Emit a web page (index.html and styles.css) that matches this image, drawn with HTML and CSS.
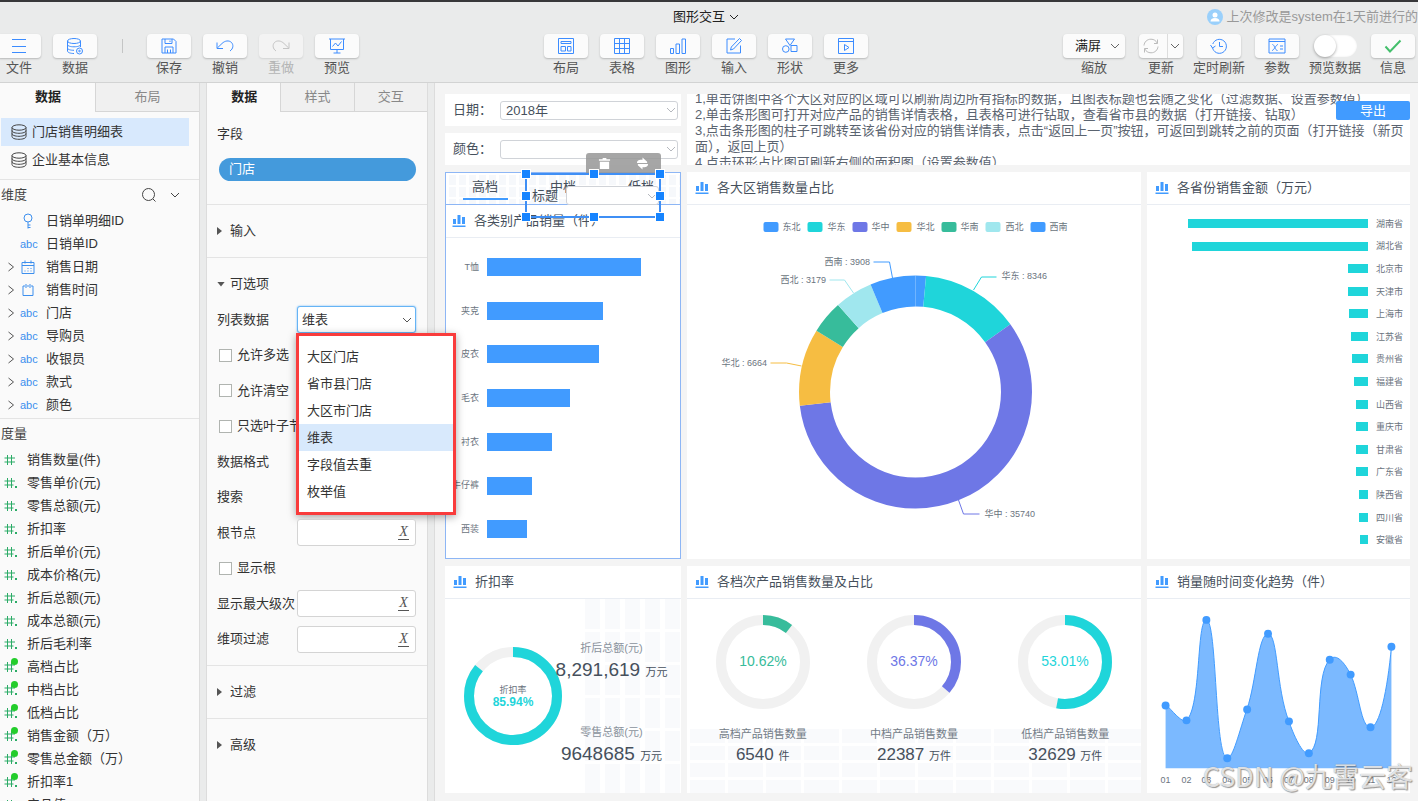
FILE: index.html
```
<!DOCTYPE html>
<html lang="zh-CN">
<head>
<meta charset="utf-8">
<title>图形交互</title>
<link rel="stylesheet" href="styles.css">
</head>
<body>
<svg class="sprite" aria-hidden="true">
  <symbol id="i-menu" viewBox="0 0 18 18"><path d="M2 2.500h14M2 9.500h14M2 15.500h14"/></symbol>
  <symbol id="i-db" viewBox="0 0 18 18"><ellipse cx="8" cy="4" rx="6.500" ry="2.500"/><path d="M1.500 4v10c0 1.500 3 2.500 6.500 2.500M14.500 4v6M1.500 7.500c0 1.500 3 2.300 6.500 2.300s6.500-.8 6.500-2.300M1.500 11c0 1.500 3 2.300 6.500 2.300"/><circle cx="13.500" cy="14" r="3"/><circle cx="13.500" cy="14" r=".8"/></symbol>
  <symbol id="i-save" viewBox="0 0 18 18"><path d="M2 2h11.500L16 4.500V16H2zM5 2v4.500h7V2M5 16v-6h8v6M7.500 12.500V16M10.500 12.500V16M10 3.500V5"/></symbol>
  <symbol id="i-undo" viewBox="0 0 18 18"><path d="M1 5.500v6h6M1.300 11L6 6.500c3-3 7-3.300 9.300-1.200 2.500 2.400 2 6.500-1.300 8.700"/></symbol>
  <symbol id="i-redo" viewBox="0 0 18 18"><path d="M17 5.500v6h-6M16.700 11L12 6.500C9 3.500 5 3.200 2.700 5.300.2 7.700.7 11.800 4 14"/></symbol>
  <symbol id="i-preview" viewBox="0 0 18 18"><path d="M1 2h16M2.500 2v10.500h13V2M4.500 9.500l3-3.500 2.500 3 3.500-4.500M9 12.500V16M5.500 16h7"/></symbol>
  <symbol id="i-layout" viewBox="0 0 18 18"><path d="M1.500 1.500h15v15h-15zM4 4.500h10v2H4zM4 9.500h4.500V14H4zM10.500 9.500H14V14h-3.500z"/></symbol>
  <symbol id="i-table" viewBox="0 0 18 18"><path d="M1.500 1.500h15v15h-15zM1.500 6.500h15M1.500 11.500h15M6.500 1.500v15M11.500 1.500v15"/></symbol>
  <symbol id="i-chart" viewBox="0 0 18 18"><path d="M1.500 11.500h3v5h-3zM7 7h3.500v9.500H7zM13 2h3.500v14.500H13z"/></symbol>
  <symbol id="i-edit" viewBox="0 0 18 18"><path d="M10 2H2v14h13.500V8.500M14.500 1.500l2 2-8 8.500-3 1 .8-3z"/></symbol>
  <symbol id="i-shape" viewBox="0 0 18 18"><path d="M4.500 2h9L9 8.500zM10 8.500h6v6h-6z"/><circle cx="4.800" cy="12" r="3.300"/></symbol>
  <symbol id="i-more" viewBox="0 0 18 18"><path d="M1.500 1.500h15v15h-15zM1.500 4.500h15M7.500 7.500l4.500 3-4.500 3z"/></symbol>
  <symbol id="i-refresh" viewBox="0 0 18 18"><path d="M2 8.500C2.300 5 5 2.200 9 2.200c3 0 5 1.500 6.300 4M15.500 2.500v4H12M16 9.500c-.3 3.500-3 6.300-7 6.300-3 0-5-1.500-6.300-4M2.500 15.500v-4H6"/></symbol>
  <symbol id="i-clock" viewBox="0 0 18 18"><path d="M2.500 10.500a7 7 0 1 0 .3-3.500M.5 8l2 3 3-2M9.500 5v4.500H13"/></symbol>
  <symbol id="i-param" viewBox="0 0 18 18"><path d="M1 2h16v14H1zM1 4.500h16M4.500 7.500c2 0 2.500 6 5 6M10 7.500c-2 0-4 6-6 6M12 9h3M12 12h3"/></symbol>
  <symbol id="i-check" viewBox="0 0 18 18"><path d="M1.500 9.500l4.500 5L16.500 3.500"/></symbol>
  <symbol id="i-down" viewBox="0 0 10 10"><path d="M1 3l4 4 4-4"/></symbol>
  <symbol id="i-right" viewBox="0 0 10 10"><path d="M2.500 1l5 4-5 4"/></symbol>
  <symbol id="i-stack" viewBox="0 0 16 16"><ellipse cx="8" cy="3.500" rx="7" ry="2.700"/><path d="M1 3.500v9c0 1.700 3 2.800 7 2.800s7-1.100 7-2.800v-9M1 6.500c0 1.700 3 2.800 7 2.800s7-1.100 7-2.800M1 9.500c0 1.700 3 2.800 7 2.800s7-1.100 7-2.800"/></symbol>
  <symbol id="i-search" viewBox="0 0 16 16"><circle cx="7.500" cy="7.500" r="6"/><path d="M12 12l2.500 2.500"/></symbol>
  <symbol id="i-key" viewBox="0 0 14 16"><circle cx="7" cy="5" r="4"/><path d="M7 9v6.500M7 12h2.500M7 14.500h2.500"/></symbol>
  <symbol id="i-date" viewBox="0 0 14 14"><path d="M1 2.500h12v11H1zM1 5.500h12M4 .5v3M10 .5v3M3.500 11h1M6.500 11h1M9.500 11h1M6.500 8.500h1M9.500 8.500h1"/></symbol>
  <symbol id="i-time" viewBox="0 0 14 14"><path d="M4 3H2v9.500h10V3h-2M6 3h2M5 1v4M9 1v4"/></symbol>
  <symbol id="i-hash" viewBox="0 0 14 14"><path d="M3.500 2v10M7.500 2v10M.5 5h10.500M.5 9h10.500"/></symbol>
  <symbol id="i-hashdot" viewBox="0 0 14 14"><path d="M3.500 2v10M7.500 2v10M.5 5h10.500M.5 9h9"/><path stroke-width="2" d="M11 11h2"/></symbol>
  <symbol id="i-bars" viewBox="0 0 14 14"><path d="M1 5h3v5H1zM5.500 1h3v9h-3zM10 3h3v7h-3zM.5 11.500h13V13H.5z"/></symbol>
</svg>

<header class="top">
  <div class="title-row">
    <button class="doc-title" type="button">图形交互<svg class="ic10"><use href="#i-down"/></svg></button>
    <p class="modified"><svg class="avatar" viewBox="0 0 16 16"><circle class="av-bg" cx="8" cy="8" r="8"/><circle class="av-fg" cx="8" cy="6" r="2.500"/><path class="av-fg" d="M3.500 12.500c0-2 1.500-3.500 4.500-3.500s4.500 1.500 4.500 3.500z"/></svg>上次修改是system在1天前进行的</p>
  </div>
  <nav class="toolbar">
    <div class="tools">
      <button class="tool" type="button"><span class="face"><svg><use href="#i-menu"/></svg></span>文件</button>
      <button class="tool" type="button"><span class="face"><svg><use href="#i-db"/></svg></span>数据</button>
      <span class="sep"></span>
      <button class="tool" type="button"><span class="face"><svg><use href="#i-save"/></svg></span>保存</button>
      <button class="tool" type="button"><span class="face"><svg><use href="#i-undo"/></svg></span>撤销</button>
      <button class="tool off" type="button" disabled><span class="face"><svg><use href="#i-redo"/></svg></span>重做</button>
      <button class="tool" type="button"><span class="face"><svg><use href="#i-preview"/></svg></span>预览</button>
    </div>
    <div class="tools">
      <button class="tool" type="button"><span class="face"><svg><use href="#i-layout"/></svg></span>布局</button>
      <button class="tool" type="button"><span class="face"><svg><use href="#i-table"/></svg></span>表格</button>
      <button class="tool" type="button"><span class="face"><svg><use href="#i-chart"/></svg></span>图形</button>
      <button class="tool" type="button"><span class="face"><svg><use href="#i-edit"/></svg></span>输入</button>
      <button class="tool" type="button"><span class="face"><svg><use href="#i-shape"/></svg></span>形状</button>
      <button class="tool" type="button"><span class="face"><svg><use href="#i-more"/></svg></span>更多</button>
    </div>
    <div class="tools right">
      <label class="tool wide"><span class="face zoom-face"><select class="zoom-select"><option>满屏</option></select><svg class="ic10"><use href="#i-down"/></svg></span>缩放</label>
      <button class="tool" type="button"><span class="face split"><svg class="grey"><use href="#i-refresh"/></svg><span class="split-arrow"><svg class="ic10"><use href="#i-down"/></svg></span></span>更新</button>
      <button class="tool" type="button"><span class="face"><svg><use href="#i-clock"/></svg></span>定时刷新</button>
      <button class="tool" type="button"><span class="face"><svg><use href="#i-param"/></svg></span>参数</button>
      <label class="tool"><input class="toggle" type="checkbox">预览数据</label>
      <button class="tool" type="button"><span class="face"><svg class="green"><use href="#i-check"/></svg></span>信息</button>
    </div>
  </nav>
</header>

<main class="work">
  <aside class="panel data-panel">
    <div class="tabs"><button class="tab on" type="button">数据</button><button class="tab" type="button">布局</button></div>
    <ul class="sources">
      <li class="source on"><svg><use href="#i-stack"/></svg>门店销售明细表</li>
      <li class="source"><svg><use href="#i-stack"/></svg>企业基本信息</li>
    </ul>
    <section class="dims">
      <h2 class="list-head">维度<span class="head-tools"><svg class="ic16"><use href="#i-search"/></svg><svg class="ic10"><use href="#i-down"/></svg></span></h2>
      <ul>
        <li class="dim"><i></i><svg class="typ key"><use href="#i-key"/></svg>日销单明细ID</li>
        <li class="dim"><i></i><span class="typ">abc</span>日销单ID</li>
        <li class="dim"><svg class="ic10"><use href="#i-right"/></svg><svg class="typ"><use href="#i-date"/></svg>销售日期</li>
        <li class="dim"><svg class="ic10"><use href="#i-right"/></svg><svg class="typ"><use href="#i-time"/></svg>销售时间</li>
        <li class="dim"><svg class="ic10"><use href="#i-right"/></svg><span class="typ">abc</span>门店</li>
        <li class="dim"><svg class="ic10"><use href="#i-right"/></svg><span class="typ">abc</span>导购员</li>
        <li class="dim"><svg class="ic10"><use href="#i-right"/></svg><span class="typ">abc</span>收银员</li>
        <li class="dim"><svg class="ic10"><use href="#i-right"/></svg><span class="typ">abc</span>款式</li>
        <li class="dim"><svg class="ic10"><use href="#i-right"/></svg><span class="typ">abc</span>颜色</li>
      </ul>
    </section>
    <section class="measures">
      <h2 class="list-head">度量</h2>
      <ul>
        <li class="mea"><svg><use href="#i-hash"/></svg>销售数量(件)</li>
        <li class="mea"><svg><use href="#i-hashdot"/></svg>零售单价(元)</li>
        <li class="mea"><svg><use href="#i-hashdot"/></svg>零售总额(元)</li>
        <li class="mea"><svg><use href="#i-hashdot"/></svg>折扣率</li>
        <li class="mea"><svg><use href="#i-hashdot"/></svg>折后单价(元)</li>
        <li class="mea"><svg><use href="#i-hashdot"/></svg>成本价格(元)</li>
        <li class="mea"><svg><use href="#i-hashdot"/></svg>折后总额(元)</li>
        <li class="mea"><svg><use href="#i-hashdot"/></svg>成本总额(元)</li>
        <li class="mea"><svg><use href="#i-hashdot"/></svg>折后毛利率</li>
        <li class="mea calc"><svg><use href="#i-hashdot"/></svg>高档占比</li>
        <li class="mea calc"><svg><use href="#i-hashdot"/></svg>中档占比</li>
        <li class="mea calc"><svg><use href="#i-hashdot"/></svg>低档占比</li>
        <li class="mea calc"><svg><use href="#i-hashdot"/></svg>销售金额（万）</li>
        <li class="mea calc"><svg><use href="#i-hashdot"/></svg>零售总金额（万）</li>
        <li class="mea calc"><svg><use href="#i-hashdot"/></svg>折扣率1</li>
        <li class="mea"><svg><use href="#i-hashdot"/></svg>产品值</li>
      </ul>
    </section>
  </aside>

  <aside class="panel prop-panel">
    <div class="tabs"><button class="tab on" type="button">数据</button><button class="tab" type="button">样式</button><button class="tab" type="button">交互</button></div>
    <section class="field-sec"><h2>字段</h2><span class="pill">门店</span></section>
    <section class="fold"><h2 class="fold-head"><span class="tri"></span>输入</h2></section>
    <section class="options">
      <h2 class="fold-head"><span class="tri open"></span>可选项</h2>
      <div class="rows">
        <div class="row"><label for="src">列表数据</label>
          <span class="combo"><select id="src" class="box focus"><option>维表</option></select><svg class="ic10"><use href="#i-down"/></svg>
            <ul class="menu"><li>大区门店</li><li>省市县门店</li><li>大区市门店</li><li class="on">维表</li><li>字段值去重</li><li>枚举值</li></ul>
          </span></div>
        <label class="row tick"><input type="checkbox">允许多选</label>
        <label class="row tick"><input type="checkbox">允许清空</label>
        <label class="row tick"><input type="checkbox">只选叶子节点</label>
        <div class="row">数据格式</div>
        <div class="row">搜索</div>
        <div class="row"><label for="root">根节点</label><span class="combo"><input id="root" class="box"><button class="fx" type="button">X</button></span></div>
        <label class="row tick"><input type="checkbox">显示根</label>
        <div class="row"><label for="lvl">显示最大级次</label><span class="combo"><input id="lvl" class="box"><button class="fx" type="button">X</button></span></div>
        <div class="row"><label for="flt">维项过滤</label><span class="combo"><input id="flt" class="box"><button class="fx" type="button">X</button></span></div>
      </div>
    </section>
    <section class="fold"><h2 class="fold-head"><span class="tri"></span>过滤</h2></section>
    <section class="fold"><h2 class="fold-head"><span class="tri"></span>高级</h2></section>
  </aside>

  <div class="canvas">
    <div class="filters">
      <div class="filter"><label for="year">日期：</label><span class="pick"><select id="year"><option>2018年</option></select><svg class="ic10"><use href="#i-down"/></svg></span></div>
      <div class="filter"><label for="color">颜色：</label><span class="pick"><select id="color"><option></option></select><svg class="ic10"><use href="#i-down"/></svg></span></div>
    </div>
    <div class="card note">
      <p>1,单击饼图中各个大区对应的区域可以刷新周边所有指标的数据，且图表标题也会随之变化（过滤数据、设置参数值）<br>2,单击条形图可打开对应产品的销售详情表格，且表格可进行钻取，查看省市县的数据（打开链接、钻取）<br>3,点击条形图的柱子可跳转至该省份对应的销售详情表，点击“返回上一页”按钮，可返回到跳转之前的页面（打开链接（新页<br>面），返回上页）<br>4,点击环形占比图可刷新右侧的面积图（设置参数值）</p>
      <button class="export" type="button">导出</button>
    </div>

    <section class="card tabbed">
      <div class="card-tabs"><button class="ctab on" type="button">高档</button><button class="ctab" type="button">中档</button><button class="ctab" type="button">低档</button></div>
      <h3 class="card-head"><svg><use href="#i-bars"/></svg>各类别产品销量（件）</h3>
      <svg class="plot" viewBox="0 0 234 320">
        <g class="fill-blue"><rect x="41" y="20" width="154" height="18"/><rect x="41" y="64" width="116" height="18"/><rect x="41" y="107" width="112" height="18"/><rect x="41" y="151" width="83" height="18"/><rect x="41" y="195" width="65" height="18"/><rect x="41" y="239" width="45" height="18"/><rect x="41" y="282" width="40" height="18"/></g>
        <g class="axis end"><text x="33" y="32">T恤</text><text x="33" y="76">夹克</text><text x="33" y="119">皮衣</text><text x="33" y="163">毛衣</text><text x="33" y="207">衬衣</text><text x="33" y="250">牛仔裤</text><text x="33" y="294">西装</text></g>
      </svg>
      <div class="selection">
        <div class="sel-tools">
          <button type="button" aria-label="删除"><svg viewBox="0 0 14 14"><path d="M1 2.500h12V4H1zM5 1h4v2H5zM2 5h10v8H2z"/></svg></button>
          <button type="button" aria-label="切换"><svg viewBox="0 0 14 14"><path d="M1 6.500C1 4 3 3 5 3h2V.5l5 4.500v1.500zM13 7.500C13 10 11 11 9 11H7v2.500L2 9V7.500z"/></svg></button>
        </div>
        <label for="sel-title">标题</label>
        <span class="pick"><select id="sel-title"><option></option></select><svg class="ic10"><use href="#i-down"/></svg></span>
        <b class="h nw"></b><b class="h n"></b><b class="h ne"></b><b class="h w"></b><b class="h e"></b><b class="h sw"></b><b class="h s"></b><b class="h se"></b>
      </div>
    </section>

    <section class="card">
      <h3 class="card-head"><svg><use href="#i-bars"/></svg>各大区销售数量占比</h3>
      <svg class="plot" viewBox="0 0 453 354">
        <g>
          <rect class="c-blue" x="76" y="17" width="15" height="10" rx="2"/><rect class="c-cyan" x="120" y="17" width="15" height="10" rx="2"/><rect class="c-violet" x="165" y="17" width="15" height="10" rx="2"/><rect class="c-amber" x="209" y="17" width="15" height="10" rx="2"/><rect class="c-green" x="254" y="17" width="15" height="10" rx="2"/><rect class="c-pale" x="298" y="17" width="15" height="10" rx="2"/><rect class="c-blue" x="343" y="17" width="15" height="10" rx="2"/>
        </g>
        <g class="axis"><text x="95" y="25">东北</text><text x="140" y="25">华东</text><text x="184" y="25">华中</text><text x="229" y="25">华北</text><text x="273" y="25">华南</text><text x="318" y="25">西北</text><text x="362" y="25">西南</text></g>
        <g class="donut" transform="rotate(-90 228 187)">
          <circle class="s-blue" cx="228" cy="187" r="101" pathLength="360" stroke-dasharray="5.300 360"/>
          <circle class="s-cyan" cx="228" cy="187" r="101" pathLength="360" stroke-dasharray="49.200 360" stroke-dashoffset="-5.300"/>
          <circle class="s-violet" cx="228" cy="187" r="101" pathLength="360" stroke-dasharray="208.600 360" stroke-dashoffset="-54.500"/>
          <circle class="s-amber" cx="228" cy="187" r="101" pathLength="360" stroke-dasharray="38.700 360" stroke-dashoffset="-263.100"/>
          <circle class="s-green" cx="228" cy="187" r="101" pathLength="360" stroke-dasharray="16.500 360" stroke-dashoffset="-301.800"/>
          <circle class="s-pale" cx="228" cy="187" r="101" pathLength="360" stroke-dasharray="19 360" stroke-dashoffset="-318.300"/>
          <circle class="s-blue" cx="228" cy="187" r="101" pathLength="360" stroke-dasharray="22.700 360" stroke-dashoffset="-337.300"/>
        </g>
        <g class="leader">
          <path class="s-blue" d="M205 73l-3-16h-16"/><path class="s-pale" d="M166 88l-9-13h-15"/><path class="s-cyan" d="M286 85l8-13h15"/><path class="s-amber" d="M114 161l-15-3H83"/><path class="s-violet" d="M271 295l5 14h16"/>
        </g>
        <g class="axis"><text x="137" y="60">西南 : 3908</text><text x="93" y="78">西北 : 3179</text><text x="314" y="74">华东 : 8346</text><text x="34" y="161">华北 : 6664</text><text x="297" y="312">华中 : 35740</text></g>
      </svg>
    </section>

    <section class="card">
      <h3 class="card-head"><svg><use href="#i-bars"/></svg>各省份销售金额（万元）</h3>
      <svg class="plot" viewBox="0 0 263 354">
        <g class="c-cyan"><rect x="41" y="14" width="180" height="9"/><rect x="45" y="37" width="176" height="9"/><rect x="201" y="59" width="20" height="9"/><rect x="201" y="82" width="20" height="9"/><rect x="202" y="104" width="19" height="9"/><rect x="204" y="127" width="17" height="9"/><rect x="205" y="149" width="16" height="9"/><rect x="207" y="172" width="14" height="9"/><rect x="209" y="195" width="12" height="9"/><rect x="209" y="217" width="12" height="9"/><rect x="209" y="240" width="12" height="9"/><rect x="209" y="262" width="12" height="9"/><rect x="212" y="285" width="9" height="9"/><rect x="212" y="308" width="9" height="9"/><rect x="213" y="330" width="8" height="9"/></g>
        <g class="axis"><text x="229" y="22">湖南省</text><text x="229" y="44">湖北省</text><text x="229" y="67">北京市</text><text x="229" y="90">天津市</text><text x="229" y="112">上海市</text><text x="229" y="135">江苏省</text><text x="229" y="157">贵州省</text><text x="229" y="180">福建省</text><text x="229" y="203">山西省</text><text x="229" y="225">重庆市</text><text x="229" y="248">甘肃省</text><text x="229" y="270">广东省</text><text x="229" y="293">陕西省</text><text x="229" y="316">四川省</text><text x="229" y="338">安徽省</text></g>
      </svg>
    </section>

    <section class="card">
      <h3 class="card-head"><svg><use href="#i-bars"/></svg>折扣率</h3>
      <div class="discount">
        <svg class="ring-lg" viewBox="0 0 98 98">
          <g class="ring" transform="rotate(-90 49 49)"><circle class="s-track" cx="49" cy="49" r="44"/><circle class="s-cyan" cx="49" cy="49" r="44" pathLength="100" stroke-dasharray="85.940 100"/></g>
          <text class="ring-name" x="49" y="46">折扣率</text><text class="ring-bold" x="49" y="59">85.94%</text>
        </svg>
        <dl class="stats"><dt>折后总额(元)</dt><dd>8,291,619 <small>万元</small></dd><dt>零售总额(元)</dt><dd>9648685 <small>万元</small></dd></dl>
      </div>
    </section>

    <section class="card">
      <h3 class="card-head"><svg><use href="#i-bars"/></svg>各档次产品销售数量及占比</h3>
      <div class="gauges">
        <dl class="gauge"><svg viewBox="0 0 94 94"><g class="ring" transform="rotate(-90 47 47)"><circle class="s-track" cx="47" cy="47" r="42"/><circle class="s-green" cx="47" cy="47" r="42" pathLength="100" stroke-dasharray="10.620 100"/></g><text class="c-green" x="47" y="51">10.62%</text></svg><dt>高档产品销售数量</dt><dd>6540 <small>件</small></dd></dl>
        <dl class="gauge"><svg viewBox="0 0 94 94"><g class="ring" transform="rotate(-90 47 47)"><circle class="s-track" cx="47" cy="47" r="42"/><circle class="s-violet" cx="47" cy="47" r="42" pathLength="100" stroke-dasharray="36.370 100"/></g><text class="c-violet" x="47" y="51">36.37%</text></svg><dt>中档产品销售数量</dt><dd>22387 <small>万件</small></dd></dl>
        <dl class="gauge"><svg viewBox="0 0 94 94"><g class="ring" transform="rotate(-90 47 47)"><circle class="s-track" cx="47" cy="47" r="42"/><circle class="s-cyan" cx="47" cy="47" r="42" pathLength="100" stroke-dasharray="53.010 100"/></g><text class="c-cyan" x="47" y="51">53.01%</text></svg><dt>低档产品销售数量</dt><dd>32629 <small>万件</small></dd></dl>
      </div>
    </section>

    <section class="card">
      <h3 class="card-head"><svg><use href="#i-bars"/></svg>销量随时间变化趋势（件）</h3>
      <svg class="plot" viewBox="1147 598 263 195">
        <path class="area" d="M1165 704C1171 709 1181 723 1186 720C1201 706 1196 619 1206 619C1217 619 1214 758 1227 758C1233 758 1239 731 1247 708C1256 682 1258 633 1268 633C1278 633 1276 688 1289 721C1293 733 1303 756 1309 753C1325 745 1314 675 1330 659C1335 653 1343 658 1351 674C1360 693 1361 727 1371 727C1380 727 1388 690 1392 646V768H1165z"/>
        <path class="trend" d="M1165 704C1171 709 1181 723 1186 720C1201 706 1196 619 1206 619C1217 619 1214 758 1227 758C1233 758 1239 731 1247 708C1256 682 1258 633 1268 633C1278 633 1276 688 1289 721C1293 733 1303 756 1309 753C1325 745 1314 675 1330 659C1335 653 1343 658 1351 674C1360 693 1361 727 1371 727C1380 727 1388 690 1392 646"/>
        <g class="c-blue"><circle cx="1165" cy="705" r="4"/><circle cx="1186" cy="720" r="4"/><circle cx="1206" cy="619" r="4"/><circle cx="1227" cy="758" r="4"/><circle cx="1247" cy="709" r="4"/><circle cx="1268" cy="633" r="4"/><circle cx="1289" cy="721" r="4"/><circle cx="1309" cy="753" r="4"/><circle cx="1330" cy="659" r="4"/><circle cx="1351" cy="674" r="4"/><circle cx="1371" cy="727" r="4"/><circle cx="1392" cy="646" r="4"/></g>
        <g class="axis mid"><text x="1165" y="783">01</text><text x="1186" y="783">02</text><text x="1206" y="783">03</text><text x="1227" y="783">04</text><text x="1247" y="783">05</text><text x="1268" y="783">06</text><text x="1289" y="783">07</text><text x="1309" y="783">08</text><text x="1330" y="783">09</text><text x="1351" y="783">10</text><text x="1371" y="783">11</text><text x="1392" y="783">12</text></g>
      </svg>
    </section>
  </div>
</main>
<div class="watermark">CSDN @九霄云客</div>
</body>
</html>
```
FILE: styles.css
```
* { box-sizing: border-box; margin: 0; padding: 0; }
body { height: 100vh; display: flex; flex-direction: column; overflow: hidden; background: #eaebeb; color: #333; font: 13px/18px "Liberation Sans", "Noto Sans CJK SC", sans-serif; }
button, select, input { font: inherit; color: inherit; background: none; border: 0; appearance: none; outline: 0; }
ul { list-style: none; }
h2, h3 { font-size: 13px; font-weight: 400; }
svg { fill: none; stroke: currentColor; flex: none; }
svg text { stroke: none; }
.sprite { display: none; }
.ic10 { width: 10px; height: 10px; }
.ic16 { width: 16px; height: 16px; }

/* header */
.top { flex: none; height: 83px; border-top: 2px solid #38383a; border-bottom: 1px solid #d2d3d3; }
.title-row { position: relative; height: 32px; display: flex; justify-content: center; padding-right: 6px; }
.doc-title { display: flex; align-items: center; gap: 4px; color: #222; height: 30px; }
.modified { position: absolute; right: 0; top: 0; height: 30px; display: flex; align-items: center; gap: 4px; color: #999; white-space: nowrap; }
.avatar { width: 16px; height: 16px; stroke: none; }
.av-bg { fill: #9ad0fb; }
.av-fg { fill: #fff; }
.toolbar { display: grid; grid-template-columns: 1fr auto 1fr; margin-left: -3px; padding-right: 3px; }
.tools { display: flex; gap: 12px; }
.tools.right { justify-content: flex-end; gap: 14px; }
.tool { width: 44px; display: flex; flex-direction: column; align-items: center; gap: 1px; white-space: nowrap; color: #555; }
.tool.wide { width: 62px; }
.face { width: 100%; height: 24px; display: flex; align-items: center; justify-content: center; border-radius: 4px; background: #fbfbfb; box-shadow: 0 1px 2px rgba(0,0,0,.22); }
.face svg { width: 18px; height: 18px; color: #3c8cff; }
.face svg.ic10 { width: 10px; height: 10px; color: #666; }
.face svg.grey { color: #bbb; }
.face svg.green { color: #44bf6c; stroke-width: 2; }
.off { color: #b4b5b5; }
.off .face { background: #f3f3f3; box-shadow: 0 1px 2px rgba(0,0,0,.1); }
.off .face svg { color: #c4c4c4; }
.sep { width: 26px; height: 24px; display: flex; justify-content: center; align-items: center; }
.sep::before { content: ""; width: 1px; height: 14px; background: #c4c5c5; }
.zoom-face { padding: 0 5px 0 12px; }
.zoom-select { flex: 1; color: #222; min-width: 0; }
.split { overflow: hidden; justify-content: space-around; }
.split-arrow { display: flex; align-items: center; height: 100%; padding-left: 2px; border-left: 1px solid #ddd; }
.toggle { width: 43px; height: 22px; margin: 1px 0; border-radius: 11px; background: #fff; box-shadow: inset 0 0 2px rgba(0,0,0,.1); }
.toggle::before { content: ""; display: block; width: 22px; height: 22px; border-radius: 11px; background: #fff; box-shadow: 0 1px 3px rgba(0,0,0,.35); }

/* panels */
.work { flex: 1; min-height: 0; display: flex; }
.panel { flex: none; overflow: hidden; background: #fafafa; }
.data-panel { width: 200px; border-right: 1px solid #dcdcdc; margin-right: 6px; }
.prop-panel { width: 222px; border: solid #dcdcdc; border-width: 0 1px; margin-right: 6px; overflow: visible; position: relative; z-index: 2; }
.tabs { display: flex; height: 29px; }
.tab { flex: 1; height: 29px; background: #f0f0f0; color: #888; border: solid #d6d6d6; border-width: 0 0 1px 1px; }
.tab.on { background: none; color: #222; font-weight: 700; border-color: transparent; }
.data-panel .tab.on { flex: none; width: 95px; }
.sources { padding: 6px 10px 6px 1px; border-bottom: 1px solid #e4e4e4; }
.source { height: 27px; padding-left: 10px; display: flex; align-items: center; gap: 5px; }
.source svg { width: 16px; height: 16px; color: #444; }
.source.on { height: 28px; background: #d8e9fd; }
.dims { border-bottom: 1px solid #e4e4e4; padding-bottom: 2px; }
.list-head { height: 29px; padding: 0 18px 0 1px; display: flex; justify-content: space-between; align-items: center; color: #444; }
.head-tools { display: flex; align-items: center; gap: 13px; padding-right: 1px; }
.dim { height: 23px; display: flex; align-items: center; padding-left: 6px; }
.dim i { width: 10px; }
.dim > .ic10 { color: #555; }
.typ { width: 16px; height: 14px; margin: 0 10px 0 4px; color: #3c8fee; font-size: 11px; line-height: 14px; }
.key { height: 16px; }
.mea { position: relative; height: 23px; display: flex; align-items: center; gap: 9px; padding-left: 4px; }
.mea svg { width: 14px; height: 14px; color: #2bab66; }
.calc::after { content: ""; position: absolute; left: 11px; top: 3px; width: 7px; height: 7px; border-radius: 4px; background: #23cd2b; }

.field-sec { height: 93px; padding: 13px 11px 0 12px; border-bottom: 1px solid #e4e4e4; }
.field-sec h2 { margin: 0 0 15px -2px; }
.pill { display: block; height: 23px; padding-left: 10px; border-radius: 12px; background: #449adc; color: #fff; line-height: 22px; }
.fold { border-bottom: 1px solid #e4e4e4; }
.fold:last-child { border: 0; }
.fold-head { height: 52px; display: flex; align-items: center; gap: 8px; padding-left: 10px; }
.tri { width: 5px; height: 8px; background: #555; clip-path: polygon(0 0, 100% 50%, 0 100%); }
.tri.open { width: 8px; height: 5px; margin-right: -3px; clip-path: polygon(0 0, 100% 0, 50% 100%); }
.options { border-bottom: 1px solid #e4e4e4; padding: 0 11px 8px 10px; }
.options .fold-head { height: 44px; padding: 8px 0 0; }
.rows { display: grid; grid-auto-rows: 1fr; height: 355px; }
.row { display: flex; align-items: center; justify-content: space-between; white-space: nowrap; }
.tick { justify-content: flex-start; gap: 5px; padding-left: 2px; }
.tick input { width: 13px; height: 13px; border: 1px solid #b0b4b0; background: #fff; }
.combo { position: relative; width: 119px; height: 27px; display: flex; align-items: center; }
.box { width: 100%; height: 27px; padding: 0 4px; border: 1px solid #d4d4d4; border-radius: 3px; background: #fff; }
.box.focus { border: 1px solid #66b4f5; box-shadow: 0 0 2px #66b4f5; }
.combo .ic10 { position: absolute; right: 4px; color: #555; }
.fx { position: absolute; right: 7px; width: 11px; height: 15px; border-bottom: 1px solid #555; color: #555; font: italic 14px/12px "Liberation Serif", serif; }
.menu { position: absolute; left: -1px; top: 27px; width: 160px; padding: 7px 0; border: 3px solid #f93c3c; background: #fff; box-shadow: 0 2px 8px rgba(0,0,0,.35); }
.menu li { height: 27px; padding-left: 8px; line-height: 27px; }
.menu li.on { background: #d8e9fc; }

/* dashboard */
.canvas { flex: 1; min-width: 0; display: grid; grid-template-columns: 236fr 454fr 263fr; grid-template-rows: 71px 387fr 227fr; gap: 7px 6px; padding: 11px 8px 8px 10px; background: #f4f4f4; border-left: 1px solid #dcdcdc; color: #46505c; }
.filters { display: grid; gap: 7px; }
.filter { display: flex; align-items: center; gap: 8px; padding: 0 3px 0 8px; background: #fff; }
.pick { flex: 1; position: relative; display: flex; align-items: center; }
.pick select { width: 100%; height: 19px; padding: 0 5px; border: 1px solid #d0d3d8; border-radius: 3px; background: #fff; line-height: 17px; }
.pick .ic10 { position: absolute; right: 2px; color: #b5b8be; }
.card { min-width: 0; min-height: 0; display: flex; flex-direction: column; background: #fff; }
.note { position: relative; grid-column: span 2; overflow: hidden; justify-content: center; padding: 2px 0 0 8px; line-height: 16px; white-space: nowrap; color: #5b6470; }
.export { position: absolute; right: 0; top: 7px; width: 74px; height: 19px; border-radius: 2px; background: #419bff; color: #fff; }
.card-head { flex: none; height: 33px; display: flex; align-items: center; gap: 8px; padding-left: 8px; border-bottom: 1px solid #e9edf3; }
.card-head svg { width: 14px; height: 14px; fill: #419bff; stroke: none; }
.plot { flex: 1; width: 100%; min-height: 0; stroke: none; }
.axis { font-size: 9px; fill: #6b7480; }
.end { text-anchor: end; }
.mid { text-anchor: middle; }
.fill-blue, .c-blue { fill: #419bff; }
.c-cyan { fill: #1fd5da; }
.c-violet { fill: #6e77e6; }
.c-amber { fill: #f6bd42; }
.c-green { fill: #37bc9b; }
.c-pale { fill: #a0e7ee; }
.s-blue { stroke: #419bff; }
.s-cyan { stroke: #1fd5da; }
.s-violet { stroke: #6e77e6; }
.s-amber { stroke: #f6bd42; }
.s-green { stroke: #37bc9b; }
.s-pale { stroke: #a0e7ee; }
.s-track { stroke: #f1f1f1; }
.donut { stroke-width: 31px; }
.ring { stroke-width: 10px; }
.leader { stroke-width: 1px; }
.area { fill: #7bb9ff; }
.trend { stroke: #419bff; }

.tabbed { position: relative; border: 1px solid #8db6f5; }
.tabbed .card-head { padding-left: 6px; }
.card-tabs { flex: none; height: 32px; display: flex; border-bottom: 1px solid #8db6f5; background: repeating-linear-gradient(90deg, #fff 0 3px, transparent 3px 10px), repeating-linear-gradient(#fff 0 2px, #f6f8fb 2px 12px); }
.ctab { flex: 1; display: flex; flex-direction: column; align-items: center; padding-top: 5px; }
.ctab.on::after { content: ""; width: 45px; height: 2px; margin-top: 2px; background: #419bff; }
.selection { position: absolute; left: 79px; top: 0; width: 136px; height: 45px; display: flex; align-items: center; gap: 8px; padding-left: 5px; border: 2px solid #3f8ff5; }
.sel-tools { position: absolute; right: -2px; top: -22px; width: 75px; height: 20px; display: flex; border-radius: 3px 3px 0 0; background: rgba(150,150,150,.85); }
.sel-tools button { flex: 1; display: flex; align-items: center; justify-content: center; }
.sel-tools svg { width: 13px; height: 13px; fill: #fff; stroke: none; }
.h { position: absolute; width: 8px; height: 8px; background: #1684ff; outline: 1px solid #fff; }
.nw, .n, .ne { top: -5px; }
.sw, .s, .se { bottom: -5px; }
.w, .e { top: 17px; }
.nw, .w, .sw { left: -5px; }
.n, .s { left: 63px; }
.ne, .e, .se { right: -5px; }

.discount { flex: 1; display: flex; align-items: center; padding-left: 19px; background: repeating-linear-gradient(90deg, #fff 0 5px, transparent 5px 20px) right / 101px 100% no-repeat, repeating-linear-gradient(#f9fafc 0 30px, #fff 30px 33px) right / 101px 100% no-repeat; }
.ring-lg { width: 98px; height: 98px; }
.ring-lg text, .gauge text { text-anchor: middle; }
.ring-name { font-size: 9px; fill: #6b7480; }
.ring-bold { font-size: 12px; font-weight: 700; fill: #1fd5da; }
.stats { flex: 1; margin-left: -20px; padding-top: 18px; text-align: center; white-space: nowrap; }
.stats dt { font-size: 11px; line-height: 16px; color: #8a929c; }
.stats dd { font-size: 19px; line-height: 28px; }
.stats dd + dt { margin-top: 38px; }
small { font-size: 11px; }
.gauges { flex: 1; display: grid; grid-template-columns: repeat(3, 1fr); padding-top: 16px; background: repeating-linear-gradient(90deg, #fff 0 3px, transparent 3px 38px) bottom / 100% 64px no-repeat, repeating-linear-gradient(#f9fafc 0 14px, #fff 14px 17px) bottom / 100% 64px no-repeat; }
.gauge { display: flex; flex-direction: column; align-items: center; }
.gauge svg { width: 94px; height: 94px; font-size: 14px; }
.gauge dt { margin-top: 17px; font-size: 11px; line-height: 16px; color: #737c87; }
.gauge dd { font-size: 17px; line-height: 26px; }
.watermark { position: absolute; right: 5px; bottom: 5px; z-index: 3; font: 27px/40px "Noto Sans CJK SC", sans-serif; color: rgba(255,255,255,.75); text-shadow: 1px 1px 1px rgba(90,90,90,.6), 0 0 1px rgba(110,110,110,.7); pointer-events: none; }
```
